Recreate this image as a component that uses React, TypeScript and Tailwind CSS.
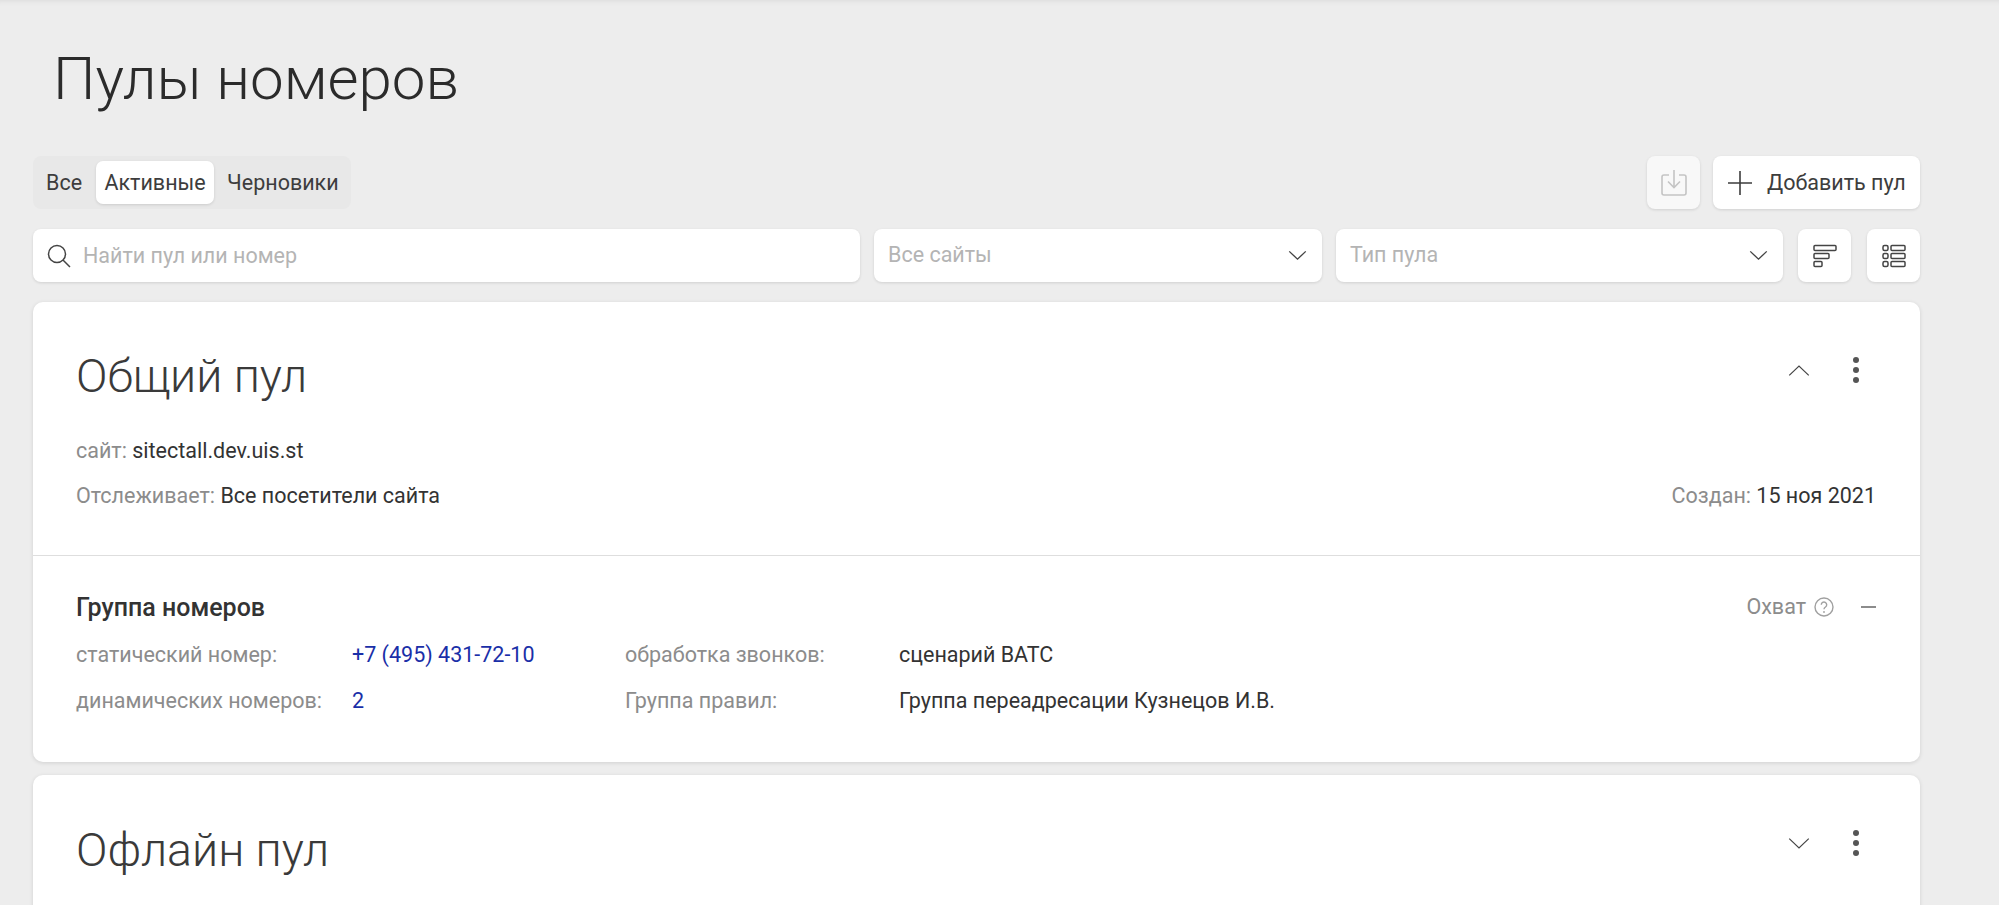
const font = { fontFamily: 'Roboto, "Noto Sans", sans-serif' };

function ChevronDown({ className = 'w-[19px] h-[11px]', stroke = 1.5 }: { className?: string; stroke?: number }) {
  return (
    <svg viewBox="0 0 20 12" fill="none" className={className}>
      <path d="M1 1.5l9 8.5 9-8.5" stroke="#444" strokeWidth={stroke} />
    </svg>
  );
}

function Dots() {
  return (
    <div className="flex w-[8px] flex-col gap-[4px]">
      <span className="h-[6px] w-[6px] rounded-full bg-[#555]" />
      <span className="h-[6px] w-[6px] rounded-full bg-[#555]" />
      <span className="h-[6px] w-[6px] rounded-full bg-[#555]" />
    </div>
  );
}

function Select({ label, width }: { label: string; width: string }) {
  return (
    <div className={`${width} flex h-[53px] items-center justify-between rounded-[8px] bg-white pl-[14px] pr-[15px] shadow-[0_1px_3px_rgba(0,0,0,0.12)]`}>
      <span className="text-[21.5px] text-[#b4b4b4]">{label}</span>
      <ChevronDown />
    </div>
  );
}

function IconButton({ children, muted }: { children: React.ReactNode; muted?: boolean }) {
  return (
    <button className={`flex h-[53px] w-[53px] items-center justify-center rounded-[8px] shadow-[0_1px_3px_rgba(0,0,0,0.12)] ${muted ? 'bg-[#f8f8f8]' : 'bg-white'}`}>
      {children}
    </button>
  );
}

export default function App() {
  return (
    <div style={font} className="h-[905px] w-full overflow-hidden bg-[#ededed] pl-[33px] pr-[79px] shadow-[inset_0_6px_6px_-6px_rgba(0,0,0,0.1)]">
      <h1 className="pl-[20px] pt-[44px] text-[60px] font-light leading-[70px] text-[#2b2b2b]">Пулы номеров</h1>

      <div className="mt-[42px] flex items-center justify-between">
        <div className="flex h-[53px] w-[318px] items-center rounded-[8px] bg-[#e8e8e8] px-[5px] text-[21.5px] text-[#3d3d3d]">
          <span className="px-[8px] pt-[2px]">Все</span>
          <span className="ml-[6px] flex h-[43px] w-[118px] items-center justify-center rounded-[7px] bg-white pt-[2px] shadow-[0_1px_3px_rgba(0,0,0,0.12)]">Активные</span>
          <span className="pl-[13px] pt-[2px]">Черновики</span>
        </div>
        <div className="flex items-center gap-[13px]">
          <IconButton muted>
            <svg viewBox="0 0 26 28" fill="none" className="h-[28px] w-[26px]">
              <path d="M8 6H3a2 2 0 0 0-2 2v16a2 2 0 0 0 2 2h20a2 2 0 0 0 2-2V8a2 2 0 0 0-2-2h-5" stroke="#c4c4c4" strokeWidth="1.6" />
              <path d="M13 1v17M7 12.5l6 6 6-6" stroke="#c4c4c4" strokeWidth="1.6" />
            </svg>
          </IconButton>
          <button className="flex h-[53px] w-[207px] items-center gap-[15px] rounded-[8px] bg-white pl-[15px] text-[21.5px] text-[#3d3d3d] shadow-[0_1px_3px_rgba(0,0,0,0.12)]">
            <svg viewBox="0 0 24 24" fill="none" className="h-[24px] w-[24px]">
              <path d="M12 0v24M0 12h24" stroke="#3d3d3d" strokeWidth="1.6" />
            </svg>
            <span className="pt-[2px]">Добавить пул</span>
          </button>
        </div>
      </div>

      <div className="mt-[20px] flex items-center">
        <div className="flex h-[53px] w-[827px] items-center gap-[12px] rounded-[8px] bg-white pl-[14px] shadow-[0_1px_3px_rgba(0,0,0,0.12)]">
          <svg viewBox="0 0 24 24" fill="none" className="h-[24px] w-[24px]">
            <circle cx="10" cy="10" r="8.5" stroke="#444" strokeWidth="1.5" />
            <path d="M16 16l7 7" stroke="#444" strokeWidth="1.5" />
          </svg>
          <span className="pt-[2px] text-[21.5px] text-[#b4b4b4]">Найти пул или номер</span>
        </div>
        <Select label="Все сайты" width="ml-[14px] w-[448px]" />
        <Select label="Тип пула" width="ml-[14px] w-[447px]" />
        <div className="ml-[15px] flex gap-[16px]">
          <IconButton>
            <svg viewBox="0 0 24 24" fill="none" className="h-[24px] w-[24px]">
              <rect x="1" y="1.5" width="22" height="5" rx="1" stroke="#444" strokeWidth="1.5" />
              <rect x="1" y="9.5" width="15" height="5" rx="1" stroke="#444" strokeWidth="1.5" />
              <rect x="1" y="17.5" width="8" height="5" rx="1" stroke="#444" strokeWidth="1.5" />
            </svg>
          </IconButton>
          <IconButton>
            <svg viewBox="0 0 24 24" fill="none" className="h-[24px] w-[24px]">
              <rect x="1" y="1.5" width="5" height="5" rx="1.5" stroke="#444" strokeWidth="1.5" />
              <rect x="9" y="1.5" width="14" height="5" rx="1" stroke="#444" strokeWidth="1.5" />
              <rect x="1" y="9.5" width="5" height="5" rx="1.5" stroke="#444" strokeWidth="1.5" />
              <rect x="9" y="9.5" width="14" height="5" rx="1" stroke="#444" strokeWidth="1.5" />
              <rect x="1" y="17.5" width="5" height="5" rx="1.5" stroke="#444" strokeWidth="1.5" />
              <rect x="9" y="17.5" width="14" height="5" rx="1" stroke="#444" strokeWidth="1.5" />
            </svg>
          </IconButton>
        </div>
      </div>

      <div className="mt-[20px] rounded-[10px] bg-white shadow-[0_1px_4px_rgba(0,0,0,0.12)]">
        <div className="h-[254px] border-b border-[#dedede] pl-[43px] pr-[44px] pt-[46px] text-[21.5px]">
          <div className="flex items-start justify-between">
            <h2 className="text-[46.5px] font-light leading-[56px] text-[#3a3a3a]">Общий пул</h2>
            <div className="mr-[15px] mt-[9px] flex items-center gap-[43px]">
              <ChevronDown className="h-[13px] w-[22px] rotate-180" stroke={1.1} />
              <Dots />
            </div>
          </div>
          <p className="mt-[33px] leading-[28px] text-[#8c8c8c]">
            сайт: <span className="text-[#333]">sitectall.dev.uis.st</span>
          </p>
          <div className="mt-[17px] flex justify-between leading-[28px] text-[#8c8c8c]">
            <p>
              Отслеживает: <span className="text-[#333]">Все посетители сайта</span>
            </p>
            <p>
              Создан: <span className="text-[#333]">15 ноя 2021</span>
            </p>
          </div>
        </div>

        <div className="h-[206px] pl-[43px] pr-[44px] pt-[35px] text-[21.5px]">
          <div className="flex items-center justify-between">
            <h3 className="text-[25px] font-medium leading-[30px] text-[#333]">Группа номеров</h3>
            <div className="mb-[1px] flex items-center text-[#8c8c8c]">
              <span>Охват</span>
              <svg viewBox="0 0 20 20" fill="none" className="ml-[8px] h-[20px] w-[20px]">
                <circle cx="10" cy="10" r="9" stroke="#a0a0a0" strokeWidth="1.4" />
                <path d="M7.3 7.8a2.7 2.7 0 1 1 4.2 2.2c-1 .7-1.5 1.1-1.5 2.2" stroke="#a0a0a0" strokeWidth="1.4" />
                <circle cx="10" cy="15" r="0.9" fill="#a0a0a0" />
              </svg>
              <span className="ml-[27px] h-[2px] w-[15px] bg-[#8c8c8c]" />
            </div>
          </div>
          <div className="mt-[17px] grid grid-cols-[276px_273px_274px_1fr] gap-y-[18px] leading-[28px]">
            <span className="text-[#8c8c8c]">статический номер:</span>
            <span className="text-[#1a2fa8]">+7 (495) 431-72-10</span>
            <span className="text-[#8c8c8c]">обработка звонков:</span>
            <span className="text-[#333]">сценарий ВАТС</span>
            <span className="text-[#8c8c8c]">динамических номеров:</span>
            <span className="text-[#1a2fa8]">2</span>
            <span className="text-[#8c8c8c]">Группа правил:</span>
            <span className="text-[#333]">Группа переадресации Кузнецов И.В.</span>
          </div>
        </div>
      </div>

      <div className="mt-[13px] h-[300px] rounded-[10px] bg-white pl-[43px] pr-[44px] pt-[47px] shadow-[0_1px_4px_rgba(0,0,0,0.12)]">
        <div className="flex items-start justify-between">
          <h2 className="text-[46.5px] font-light leading-[56px] text-[#3a3a3a]">Офлайн пул</h2>
          <div className="mr-[15px] mt-[8px] flex items-center gap-[43px]">
            <ChevronDown className="h-[13px] w-[22px]" stroke={1.1} />
            <Dots />
          </div>
        </div>
      </div>
    </div>
  );
}
